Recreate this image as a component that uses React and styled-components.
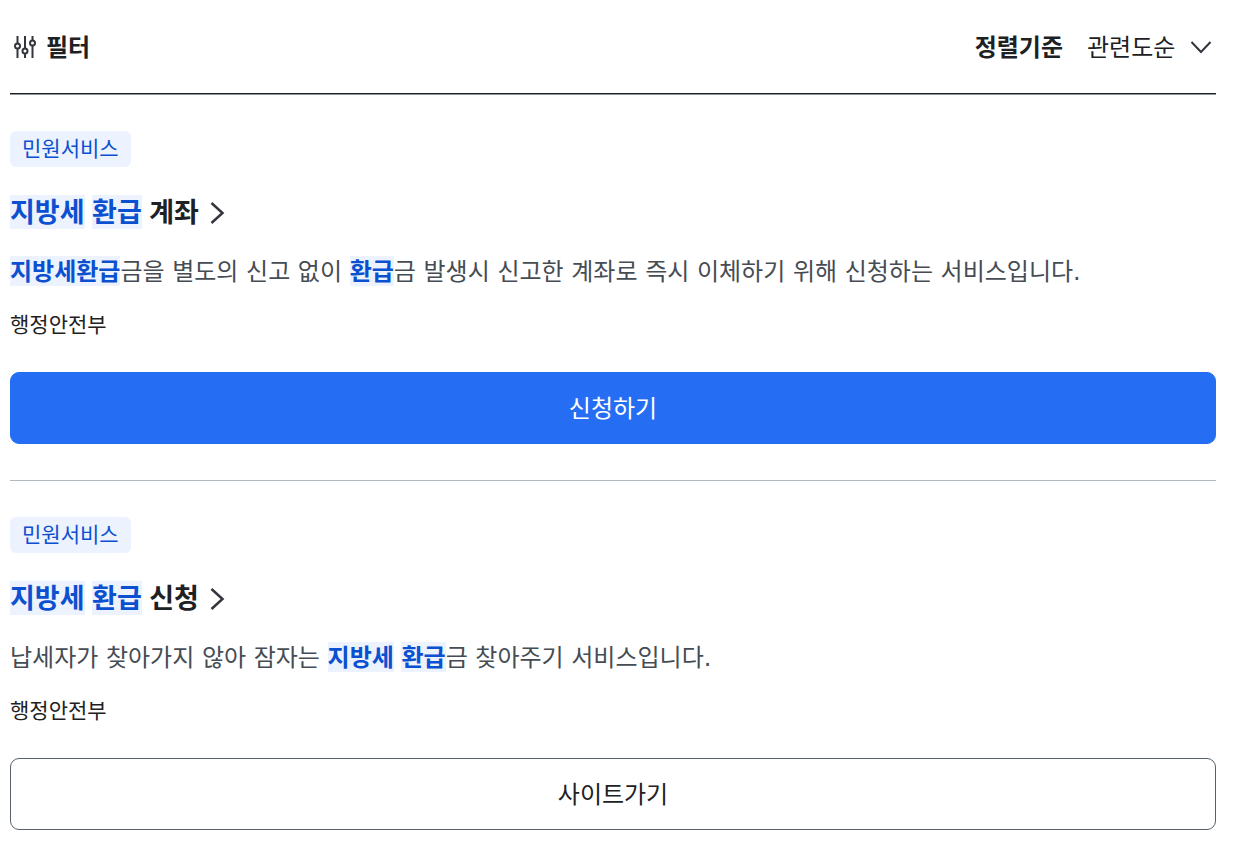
import React from "react";
import styled, { createGlobalStyle, css } from "styled-components";

const GlobalStyle = createGlobalStyle`
  *, *::before, *::after { box-sizing: border-box; }
  body {
    margin: 0;
    background: #ffffff;
    color: #1e2124;
    font-family: "Liberation Sans", "Noto Sans CJK KR", sans-serif;
    font-size: 24px;
    line-height: 36px;
  }
  button, select { font: inherit; color: inherit; }
`;

const Page = styled.main`
  padding: 0 21px 22px 10px;
`;

const Toolbar = styled.header`
  display: flex;
  align-items: center;
  justify-content: space-between;
  padding: 30px 0 27px;
  border-bottom: 1px solid #1e2124;
  box-shadow: 0 1px 0 #8a949e;
  margin-bottom: 1px;
`;

const FilterButton = styled.button`
  display: flex;
  align-items: center;
  gap: 8px;
  padding: 0 0 0 2px;
  border: 0;
  background: none;
  font-weight: 700;
  cursor: pointer;
`;

const Sort = styled.div`
  display: flex;
  align-items: center;
  gap: 24px;
`;

const SortLabel = styled.label`
  font-weight: 700;
`;

const SelectWrap = styled.div`
  position: relative;
  display: flex;
`;

const Select = styled.select`
  appearance: none;
  height: 36px;
  padding: 0 40px 0 0;
  border: 0;
  background: none;
  cursor: pointer;
`;

const SelectArrow = styled.svg`
  position: absolute;
  top: 5px;
  right: 3px;
  pointer-events: none;
`;

const Results = styled.ul`
  margin: 0;
  padding: 0;
  list-style: none;
`;

const Result = styled.li`
  display: flex;
  flex-direction: column;
  align-items: flex-start;
  padding: 36px 0;

  & + & { border-top: 1px solid #b1b8be; }
  &:last-child { padding-bottom: 0; }
`;

const Badge = styled.span`
  padding: 0 12px;
  border-radius: 6px;
  background: #ecf2fe;
  color: #0b50d0;
  font-size: 21px;
  line-height: 36px;
`;

const Title = styled.h2`
  margin: 25px 0 20px;
  font-size: 27px;
  line-height: 42px;
  font-weight: 700;
`;

const TitleLink = styled.a`
  display: flex;
  align-items: center;
  gap: 6px;
  color: inherit;
  text-decoration: none;
`;

const Mark = styled.mark`
  padding: ${({ $large }) => ($large ? "3px 0 1px" : "2px 0 0")};
  background: #ecf2fe;
  color: #0b50d0;
  font-weight: 700;
`;

const Description = styled.p`
  margin: 0 0 19px;
  font-family: "DejaVu Sans", "Noto Sans CJK KR", sans-serif;
  color: #464c53;
`;

const Agency = styled.p`
  margin: 0 0 32px;
  font-size: 21px;
  line-height: 31px;
`;

const Action = styled.button`
  width: 100%;
  height: 72px;
  padding: 1px 0 0;
  border-radius: 9px;
  cursor: pointer;
  ${({ $primary }) =>
    $primary
      ? css`
          border: 1px solid #256ef4;
          background: #256ef4;
          color: #ffffff;
        `
      : css`
          border: 1px solid #58616a;
          background: #ffffff;
          color: #1e2124;
        `}
`;

const FilterIcon = () => (
  <svg width="26" height="26" viewBox="0 0 26 26" fill="none" stroke="#33363d" strokeWidth="2" aria-hidden="true">
    <path d="M5.500 1v7.500M5.500 13.500v9.500M13 1v12.500M13 18.500v4.500M20.500 1v4.500M20.500 10.500v12.500" />
    <circle cx="5.500" cy="11" r="2.500" />
    <circle cx="13" cy="16" r="2.500" />
    <circle cx="20.500" cy="8" r="2.500" />
  </svg>
);

const TitleArrow = () => (
  <svg width="24" height="26" viewBox="0 0 24 26" fill="none" stroke="#33363d" strokeWidth="2.500" aria-hidden="true">
    <path d="M6.500 3l11 10-11 10" />
  </svg>
);

const items = [
  {
    title: [{ mark: "지방세" }, " ", { mark: "환급" }, " 계좌"],
    description: [
      { mark: "지방세환급" },
      "금을 별도의 신고 없이 ",
      { mark: "환급" },
      "금 발생시 신고한 계좌로 즉시 이체하기 위해 신청하는 서비스입니다.",
    ],
    action: "신청하기",
    primary: true,
  },
  {
    title: [{ mark: "지방세" }, " ", { mark: "환급" }, " 신청"],
    description: [
      "납세자가 찾아가지 않아 잠자는 ",
      { mark: "지방세" },
      " ",
      { mark: "환급" },
      "금 찾아주기 서비스입니다.",
    ],
    action: "사이트가기",
    primary: false,
  },
];

const Highlighted = ({ parts, large }) =>
  parts.map((part, i) =>
    typeof part === "string" ? part : <Mark key={i} $large={large}>{part.mark}</Mark>
  );

export default function App() {
  return (
    <>
      <GlobalStyle />
      <Page>
        <Toolbar>
          <FilterButton type="button">
            <FilterIcon />
            필터
          </FilterButton>
          <Sort>
            <SortLabel htmlFor="sort">정렬기준</SortLabel>
            <SelectWrap>
              <Select id="sort" defaultValue="relevance">
                <option value="relevance">관련도순</option>
              </Select>
              <SelectArrow width="24" height="24" viewBox="0 0 24 24" fill="none" stroke="#33363d" strokeWidth="2" aria-hidden="true">
                <path d="M2.500 7l9.500 10 9.500-10" />
              </SelectArrow>
            </SelectWrap>
          </Sort>
        </Toolbar>
        <Results>
          {items.map((item) => (
            <Result key={item.action}>
              <Badge>민원서비스</Badge>
              <Title>
                <TitleLink href="#">
                  <span><Highlighted parts={item.title} large /></span>
                  <TitleArrow />
                </TitleLink>
              </Title>
              <Description><Highlighted parts={item.description} /></Description>
              <Agency>행정안전부</Agency>
              <Action type="button" $primary={item.primary}>{item.action}</Action>
            </Result>
          ))}
        </Results>
      </Page>
    </>
  );
}
